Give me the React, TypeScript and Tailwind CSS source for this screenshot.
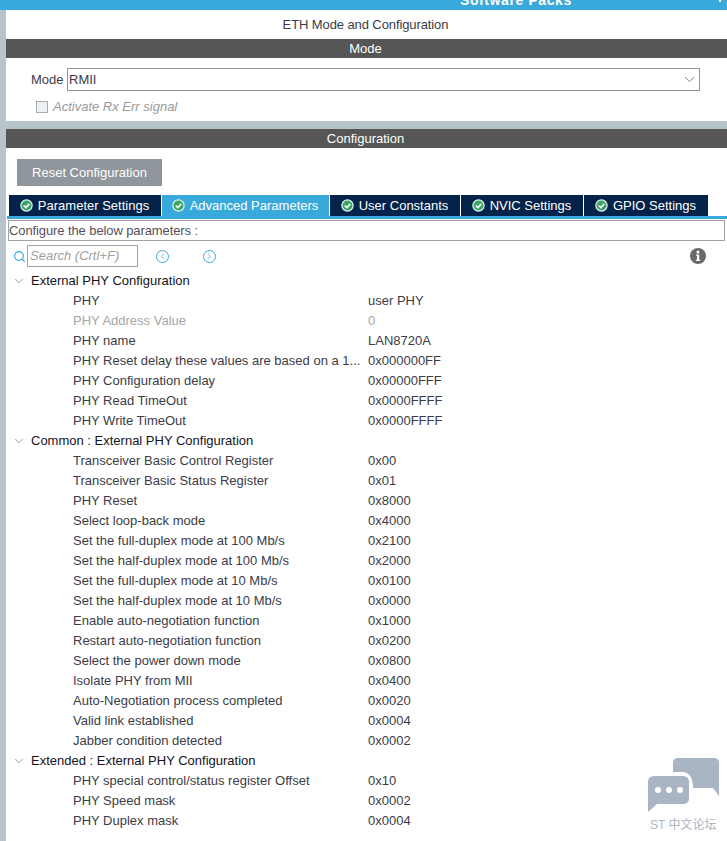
import React from 'react';
import { ChevronDown, Search, ChevronLeft, ChevronRight } from 'lucide-react';

const tabs = [
  { name: 'Parameter Settings', width: 'w-[152px]', active: false },
  { name: 'Advanced Parameters', width: 'w-[167px]', active: true },
  { name: 'User Constants', width: 'w-[130px]', active: false },
  { name: 'NVIC Settings', width: 'w-[122px]', active: false },
  { name: 'GPIO Settings', width: 'w-[124px]', active: false },
];

const sections = [
  {
    title: 'External PHY Configuration',
    rows: [
      ['PHY', 'user PHY'],
      ['PHY Address Value', '0', 'off'],
      ['PHY name', 'LAN8720A'],
      ['PHY Reset delay these values are based on a 1...', '0x000000FF'],
      ['PHY Configuration delay', '0x00000FFF'],
      ['PHY Read TimeOut', '0x0000FFFF'],
      ['PHY Write TimeOut', '0x0000FFFF'],
    ],
  },
  {
    title: 'Common : External PHY Configuration',
    rows: [
      ['Transceiver Basic Control Register', '0x00'],
      ['Transceiver Basic Status Register', '0x01'],
      ['PHY Reset', '0x8000'],
      ['Select loop-back mode', '0x4000'],
      ['Set the full-duplex mode at 100 Mb/s', '0x2100'],
      ['Set the half-duplex mode at 100 Mb/s', '0x2000'],
      ['Set the full-duplex mode at 10 Mb/s', '0x0100'],
      ['Set the half-duplex mode at 10 Mb/s', '0x0000'],
      ['Enable auto-negotiation function', '0x1000'],
      ['Restart auto-negotiation function', '0x0200'],
      ['Select the power down mode', '0x0800'],
      ['Isolate PHY from MII', '0x0400'],
      ['Auto-Negotiation process completed', '0x0020'],
      ['Valid link established', '0x0004'],
      ['Jabber condition detected', '0x0002'],
    ],
  },
  {
    title: 'Extended : External PHY Configuration',
    rows: [
      ['PHY special control/status register Offset', '0x10'],
      ['PHY Speed mask', '0x0002'],
      ['PHY Duplex mask', '0x0004'],
    ],
  },
];

function TabCheck({ active }: { active: boolean }) {
  return (
    <svg width="13" height="13" viewBox="0 0 13 13" className="shrink-0">
      <circle cx="6.5" cy="6.5" r="6.2" fill={active ? '#dff3ea' : '#e8f5ee'} />
      <circle cx="6.5" cy="6.5" r="5" fill="#3aa567" />
      <path d="M3.7 6.5 L5.8 8.5 L9.3 4.9" fill="none" stroke="#ffffff" strokeWidth="1.6" />
    </svg>
  );
}

function Bar({ text }: { text: string }) {
  return (
    <div className="h-[19px] bg-[#555655] text-white text-[13px] leading-[19px] text-center pr-[2px]">{text}</div>
  );
}

export default function App() {
  return (
    <div className="relative w-[727px] h-[841px] overflow-hidden bg-[#b8c4cc] text-[13px] text-[#3c3c46] font-['Liberation_Sans',sans-serif] flex flex-col">
      <div className="h-[10px] shrink-0 bg-[#39a9dc] overflow-hidden flex justify-between pl-[460px] pr-[6px]">
        <div className="text-white font-bold text-[14px] leading-[14px] -mt-[7px] tracking-[0.6px]">Software Packs</div>
        <div className="w-[2px] h-[2px] bg-white"></div>
      </div>

      <div className="ml-[6px] flex flex-col flex-1 min-h-0">
        <div className="bg-white h-[29px] shrink-0 text-center leading-[29px] pr-[2px] tracking-[-0.1px]">ETH Mode and Configuration</div>
        <Bar text="Mode" />
        <div className="bg-white h-[63px] shrink-0">
          <div className="flex items-center pt-[10px] pl-[25px] h-[33px]">
            <span className="w-[36px]">Mode</span>
            <div className="w-[633px] h-[23px] border border-[#8f969c] flex items-center justify-between pl-[1px] pr-[1px]">
              <span>RMII</span>
              <ChevronDown size={17} strokeWidth={1} className="text-[#555]" />
            </div>
          </div>
          <div className="flex items-center gap-[5px] pl-[30px] mt-[6px] italic text-[#9a9a9a]">
            <span className="w-[12px] h-[12px] border border-[#a6adb2] bg-[#f0f1f2]"></span>
            Activate Rx Err signal
          </div>
        </div>
        <div className="h-[8px] shrink-0"></div>
        <Bar text="Configuration" />

        <div className="bg-white flex-1 min-h-0">
          <div className="pt-[11px] pl-[11px]">
            <div className="w-[145px] h-[27px] bg-[#8f969c] text-white leading-[27px] text-center">Reset Configuration</div>
          </div>
          <div className="flex gap-[1px] mt-[9px] pl-[3px]">
            {tabs.map((t) => (
              <div
                key={t.name}
                className={`${t.width} h-[21px] flex items-center justify-center gap-[5px] pr-[1px] ${t.active ? 'bg-[#39a9dc] text-white' : 'bg-[#03234b] text-white'}`}
              >
                <TabCheck active={t.active} />
                {t.name}
              </div>
            ))}
          </div>
          <div className="h-[3px] ml-[1px] bg-[#39a9dc]"></div>
          <div className="ml-[2px] mt-[1px] w-[717px] h-[21px] border border-[#9ea3a7] leading-[19px] tracking-[-0.1px] text-[#55505a]">Configure the below parameters :</div>

          <div className="flex items-center h-[22px] mt-[4px] pl-[7px]">
            <Search size={13} strokeWidth={2.2} className="text-[#39a9dc] mr-[1px]" />
            <div className="w-[111px] h-[22px] border border-[#9ea3a7] pl-[2px] italic text-[#a0a0a0] leading-[20px]">Search (Crtl+F)</div>
            <span className="ml-[18px] w-[13px] h-[13px] rounded-full border border-[#39a9dc] flex items-center justify-center">
              <ChevronLeft size={9} strokeWidth={2} className="text-[#39a9dc]" />
            </span>
            <span className="ml-[34px] w-[13px] h-[13px] rounded-full border border-[#39a9dc] flex items-center justify-center">
              <ChevronRight size={9} strokeWidth={2} className="text-[#39a9dc]" />
            </span>
            <svg width="16" height="16" viewBox="0 0 16 16" className="ml-[474px]">
              <circle cx="8" cy="8" r="8" fill="#6a6a6a" />
              <circle cx="8" cy="4" r="1.5" fill="#ffffff" />
              <path d="M6 6.5 H9.2 V11.8 H10.2 V13 H5.9 V11.8 H7 V7.7 H6 Z" fill="#ffffff" />
            </svg>
          </div>

          <div className="mt-[4px]">
            {sections.map((s) => (
              <div key={s.title}>
                <div className="h-[20px] flex items-center text-[#14141e]">
                  <ChevronDown size={14} strokeWidth={1} className="ml-[6px] mr-[5px] text-[#555]" />
                  {s.title}
                </div>
                {s.rows.map((r) => (
                  <div key={r[0]} className={`h-[20px] flex items-center pl-[67px] ${r[2] ? 'text-[#a6a6a6]' : ''}`}>
                    <span className="w-[295px] whitespace-nowrap overflow-hidden">{r[0]}</span>
                    <span>{r[1]}</span>
                  </div>
                ))}
              </div>
            ))}
          </div>
        </div>
      </div>

      <div className="absolute left-[648px] top-[757px] w-[72px] h-[76px]">
        <svg width="72" height="57" viewBox="0 0 72 57" className="absolute left-0 top-0">
          <path d="M30 1 H66 Q71 1 71 6 V31 V39 L65 31 H45 Q45 17 36 15 L25 15 V6 Q25 1 30 1 Z" fill="#a9b5c3" />
          <path d="M6 19 H35 Q41 19 41 25 V41 Q41 47 35 47 H9 L0 55 V25 Q0 19 6 19 Z" fill="#a9b5c3" />
          <circle cx="10" cy="33" r="3" fill="#ffffff" />
          <circle cx="21" cy="33" r="3" fill="#ffffff" />
          <circle cx="32" cy="33" r="3" fill="#ffffff" />
        </svg>
        <div className="absolute left-[2px] top-[61px] whitespace-nowrap text-[12px] leading-[14px] text-[#a9b5c3] font-['Liberation_Sans','Noto_Sans_CJK_SC',sans-serif]">ST 中文论坛</div>
      </div>
    </div>
  );
}
